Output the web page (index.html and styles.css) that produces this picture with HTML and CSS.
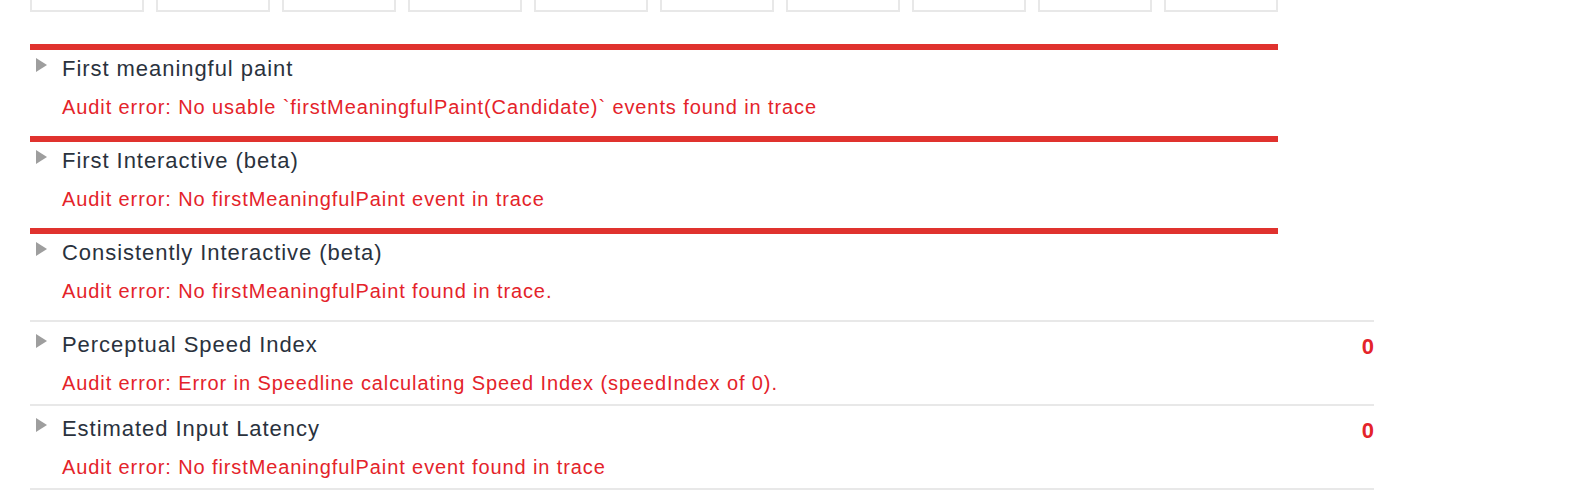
FILE: index.html
```html
<!DOCTYPE html>
<html>
<head>
<meta charset="utf-8">
<link rel="stylesheet" href="styles.css">
</head>
<body>
<div class="page">
  <div class="tiles">
    <div class="tile"></div><div class="tile"></div><div class="tile"></div><div class="tile"></div><div class="tile"></div>
    <div class="tile"></div><div class="tile"></div><div class="tile"></div><div class="tile"></div><div class="tile"></div>
  </div>
  <div class="audits">
    <div class="audit audit--error">
      <svg class="arrow" viewBox="0 0 11 14" width="11" height="14"><polygon points="0,0 11,7 0,14" fill="#9e9e9e"/></svg>
      <div class="body">
        <div class="title">First meaningful paint</div>
        <div class="msg">Audit error: No usable `firstMeaningfulPaint(Candidate)` events found in trace</div>
      </div>
    </div>
    <div class="audit audit--error">
      <svg class="arrow" viewBox="0 0 11 14" width="11" height="14"><polygon points="0,0 11,7 0,14" fill="#9e9e9e"/></svg>
      <div class="body">
        <div class="title">First Interactive (beta)</div>
        <div class="msg">Audit error: No firstMeaningfulPaint event in trace</div>
      </div>
    </div>
    <div class="audit audit--error">
      <svg class="arrow" viewBox="0 0 11 14" width="11" height="14"><polygon points="0,0 11,7 0,14" fill="#9e9e9e"/></svg>
      <div class="body">
        <div class="title">Consistently Interactive (beta)</div>
        <div class="msg">Audit error: No firstMeaningfulPaint found in trace.</div>
      </div>
    </div>
    <div class="audit">
      <svg class="arrow" viewBox="0 0 11 14" width="11" height="14"><polygon points="0,0 11,7 0,14" fill="#9e9e9e"/></svg>
      <div class="body">
        <div class="title">Perceptual Speed Index</div>
        <div class="msg">Audit error: Error in Speedline calculating Speed Index (speedIndex of 0).</div>
      </div>
      <div class="score">0</div>
    </div>
    <div class="audit audit--last">
      <svg class="arrow" viewBox="0 0 11 14" width="11" height="14"><polygon points="0,0 11,7 0,14" fill="#9e9e9e"/></svg>
      <div class="body">
        <div class="title">Estimated Input Latency</div>
        <div class="msg">Audit error: No firstMeaningfulPaint event found in trace</div>
      </div>
      <div class="score">0</div>
    </div>
  </div>
</div>
</body>
</html>
```
FILE: styles.css
```css
html, body {
  margin: 0;
  padding: 0;
  background: #ffffff;
}
body {
  font-family: "Liberation Sans", Arial, sans-serif;
  overflow: hidden;
}
.page {
  padding-left: 30px;
  width: 1344px;
}
.tiles {
  display: flex;
  gap: 12px;
  width: 1248px;
}
.tile {
  flex: 1;
  height: 10px;
  border: 2px solid #e8e8e8;
  border-top: none;
}
.audits {
  margin-top: 32px;
}
.audit {
  display: flex;
  align-items: flex-start;
  border-top: 2px solid #e8e8e8;
  padding: 11px 0 10px 6px;
}
.audit--error {
  border-top: 6px solid #e0322e;
  padding-top: 7px;
  padding-bottom: 18px;
  margin-right: 96px;
}
.audit--last {
  border-bottom: 2px solid #e8e8e8;
}
.arrow {
  flex: none;
  margin-top: 1px;
  margin-right: 15px;
}
.body {
  flex: 1;
}
.title {
  font-size: 22px;
  line-height: 24px;
  letter-spacing: 0.95px;
  color: #2a323d;
}
.msg {
  margin-top: 15px;
  font-size: 20px;
  line-height: 22px;
  letter-spacing: 0.9px;
  color: #e4232a;
}
.score {
  flex: none;
  font-size: 22px;
  line-height: 24px;
  font-weight: bold;
  color: #e4232a;
  margin-top: 2px;
}
```
